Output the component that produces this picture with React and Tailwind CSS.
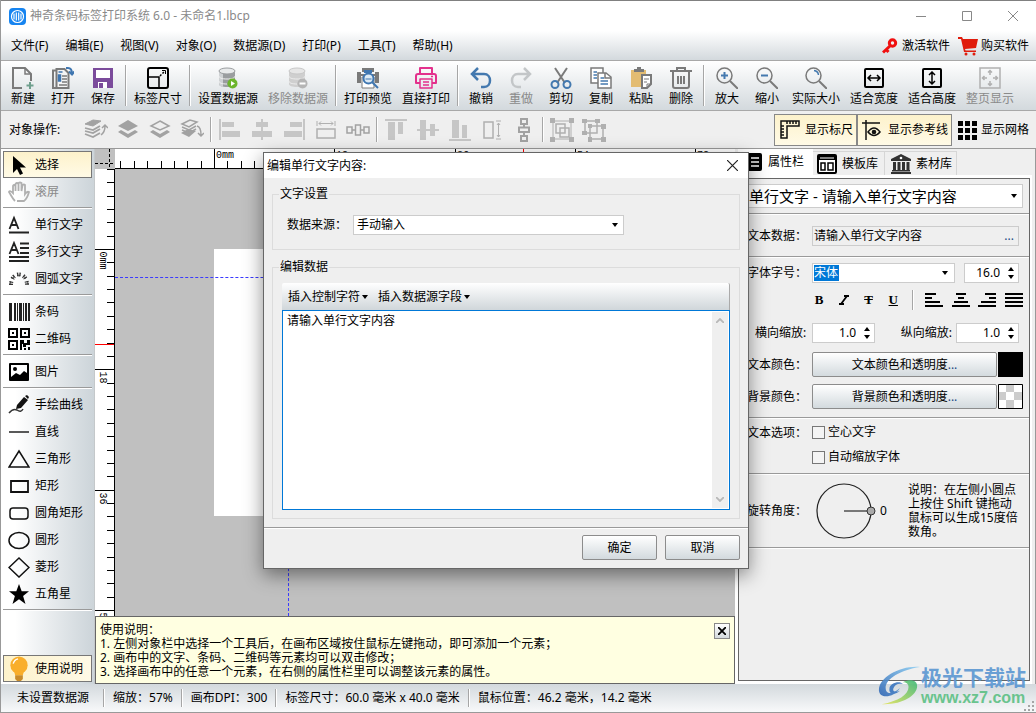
import React, { useState } from 'react';
import clsx from 'clsx';

const G = '#7a7a7a';
const D = '#b0b0b0';

const toolIcons = {
  new: (
    <g fill="none" stroke={G} strokeWidth="2">
      <path d="M10 21H1V1h12l6 6v7" /><path d="M13 1v6h6" strokeWidth="1.5" />
      <path d="M18 15v7M14.500 18.500h7" stroke="#6f9f8d" />
    </g>
  ),
  open: (
    <g fill="none" stroke={G} strokeWidth="1.500">
      <path d="M4 3.500H1V21h3" strokeWidth="2" /><path d="M4.500 2h8l4 4v15h-12z" fill="#f4f4f4" strokeWidth="2" />
      <path d="M10 9h5M10 12h5M10 15h5M7 18h8" /><path d="M6.500 8h2v6h-2zM6.500 5h4" stroke="#3f76b0" fill="#3f76b0" />
      <path d="M14 1h2c3 0 4 2 4 6M17 4.500l3 3 2.500-3" stroke="#3f76b0" strokeWidth="2" />
    </g>
  ),
  save: (
    <g>
      <path d="M1 1h20v20H1z" fill="#7b4b9b" /><path d="M4 3h14v8H4z" fill="#fff" />
      <path d="M6 15h9v6H6z" fill="#fff" /><path d="M7 16h4v5H7z" fill="#7b4b9b" />
    </g>
  ),
  size: (
    <g fill="none" stroke="#000" strokeWidth="2">
      <rect x="1" y="1" width="20" height="20" rx="2" /><path d="M1 10h11v11" strokeWidth="1.500" />
      <path d="M13 9l5-5" strokeDasharray="2 1.500" strokeWidth="1.500" /><path d="M15 3.500h3.500V7" strokeWidth="1" />
    </g>
  ),
  db: (
    <g>
      <path d="M2 4v13c0 2 3 3 8 3s8-1 8-3V4z" fill="#9a9d9f" />
      <path d="M2 4v13c0 2 2 2.500 4 3V5z" fill="#cfd2d4" />
      <ellipse cx="10" cy="4" rx="8" ry="3" fill="#e8eaeb" stroke="#9a9d9f" />
      <path d="M2 9c0 2 3 3 8 3s8-1 8-3M2 14c0 2 3 3 8 3" fill="none" stroke="#f1f1f1" />
      <circle cx="15.500" cy="16.500" r="5" fill="#6cb52d" /><path d="M14 14l4 2.500-4 2.500z" fill="#fff" />
    </g>
  ),
  dbOff: (
    <g>
      <path d="M2 4v13c0 2 3 3 8 3s8-1 8-3V4z" fill="#cfcfcf" />
      <ellipse cx="10" cy="4" rx="8" ry="3" fill="#e6e6e6" stroke="#c8c8c8" />
      <path d="M2 9c0 2 3 3 8 3s8-1 8-3M2 14c0 2 3 3 8 3" fill="none" stroke="#eee" />
      <circle cx="15.500" cy="16.500" r="5" fill="#b5b5b5" /><path d="M12.500 15.500h6v2h-6z" fill="#fff" />
    </g>
  ),
  preview: (
    <g>
      <path d="M0 5h4v2h14V5h4v11h-4V9H4v7H0z" fill={G} />
      <path d="M5 1h12v4H5z" fill={G} /><path d="M7 3h8v3H7z" fill="#3f76b0" />
      <path d="M5 10h12v11H5z" fill="#fff" stroke={G} />
      <circle cx="11.500" cy="11.500" r="5" fill="#dceaf5" stroke="#3f76b0" strokeWidth="2" />
      <path d="M8.500 12h6" stroke="#3f76b0" /><path d="M15 15l6 6" stroke="#3f76b0" strokeWidth="2" />
    </g>
  ),
  print: (
    <g fill="none" stroke="#e3308c" strokeWidth="2" strokeLinejoin="round">
      <path d="M5 7V1h12v6M5 16H1V9q0-2 2-2h16q2 0 2 2v7h-4" /><path d="M5 12h12v9H5zM8 15h6M8 18h6M16 9.500h2" strokeWidth="1.500" />
    </g>
  ),
  undo: <path d="M8 1L2 7l6 6M2 7h12c8 0 8 13 0 13h-3" fill="none" stroke="#4479af" strokeWidth="2.500" />,
  redo: <path d="M14 1l6 6-6 6M20 7H8C0 7 0 20 8 20h3" fill="none" stroke="#c3c6c8" strokeWidth="2.500" />,
  cut: (
    <g fill="none" strokeWidth="2">
      <path d="M5 1l10 15M17 1L7 16" stroke={G} /><circle cx="5" cy="17.500" r="3.500" stroke="#4479af" />
      <circle cx="17" cy="17.500" r="3.500" stroke="#4479af" />
    </g>
  ),
  copy: (
    <g fill="#fff" stroke={G} strokeWidth="1.500">
      <path d="M1 1h12v15H1z" /><path d="M3.500 5H7M3.500 8H7M3.500 11H7" stroke="#4479af" />
      <path d="M8 6h8l5 4v11H8z" /><path d="M15 6v5h6" fill="none" />
      <path d="M10.500 11H14M10.500 14H18M10.500 17H18" stroke="#4479af" />
    </g>
  ),
  paste: (
    <g>
      <path d="M1 3h15v17H1z" fill="#e3bc72" /><path d="M4 5V2h3V0h4v2h3v3z" fill={G} />
      <path d="M12 8h9v9l-4 4h-5z" fill="#fff" stroke={G} strokeWidth="2" /><path d="M14 12h5M14 15h3M17 21v-4h4" stroke={G} fill="none" />
    </g>
  ),
  trash: (
    <g fill="none" stroke={G} strokeWidth="2">
      <path d="M0 4h22M7 4V1h8v3M3 5v14q0 2 2 2h12q2 0 2-2V5" /><path d="M8 9v8M11 9v8M14 9v8" />
    </g>
  ),
  zoomIn: (
    <g fill="none" stroke={G} strokeWidth="1.500">
      <circle cx="8.500" cy="8.500" r="7.500" /><path d="M14 14l8 8" strokeWidth="2" />
      <path d="M8.500 5v7M5 8.500h7" stroke="#4479af" strokeWidth="2" />
    </g>
  ),
  zoomOut: (
    <g fill="none" stroke={G} strokeWidth="1.500">
      <circle cx="8.500" cy="8.500" r="7.500" /><path d="M14 14l8 8" strokeWidth="2" />
      <path d="M5 8.500h7" stroke="#4479af" strokeWidth="2" />
    </g>
  ),
  actual: (
    <g fill="none" stroke={G} strokeWidth="1.500">
      <circle cx="8.500" cy="8.500" r="7.500" /><path d="M14 14l8 8" strokeWidth="2" />
      <path d="M9 3.500q4 .5 4.500 4.500" stroke="#4479af" />
    </g>
  ),
  fitW: (
    <g fill="none" stroke="#000" strokeWidth="1.500">
      <rect x="2" y="2" width="18" height="18" rx="1" strokeWidth="2" /><path d="M4.500 11h13M8 8l-3 3 3 3M14 8l3 3-3 3" />
    </g>
  ),
  fitH: (
    <g fill="none" stroke="#000" strokeWidth="1.500">
      <rect x="2" y="2" width="18" height="18" rx="1" strokeWidth="2" /><path d="M11 4.500v13M8 8l3-3 3 3M8 14l3 3 3-3" />
    </g>
  ),
  fitPage: (
    <g fill="none" stroke={D} strokeWidth="1.500">
      <path d="M1 1h20v20H1z" /><path d="M11 4v4M11 14v4M4 11h4M14 11h4M9 5.500l2-2 2 2M9 16.500l2 2 2-2M5.500 9l-2 2 2 2M16.500 9l2 2-2 2" />
    </g>
  ),
};

const toolGroups = [
  [['新建', 'new'], ['打开', 'open'], ['保存', 'save']],
  [['标签尺寸', 'size']],
  [['设置数据源', 'db'], ['移除数据源', 'dbOff', true]],
  [['打印预览', 'preview'], ['直接打印', 'print']],
  [['撤销', 'undo'], ['重做', 'redo', true], ['剪切', 'cut'], ['复制', 'copy'], ['粘贴', 'paste'], ['删除', 'trash']],
  [['放大', 'zoomIn'], ['缩小', 'zoomOut'], ['实际大小', 'actual'], ['适合宽度', 'fitW'], ['适合高度', 'fitH'], ['整页显示', 'fitPage', true]],
];

const toolWidths = { 2: 'w-10', 4: 'w-[58px]', 5: 'w-[70px]' };

const opGroups = [
  [
    ['置于顶层', <g><path d="M1 6l8-4 8 1-8 5z" fill="#a2a2a2" stroke="#a2a2a2" /><path d="M1 10l8 2 7-4M1 13l8 2 7-4M1 16l8 3 7-4" fill="none" stroke="#a2a2a2" strokeWidth="1.800" /><path d="M17 17q4-3 4-9M18 10l3-3 3 3" fill="none" stroke="#a2a2a2" strokeWidth="1.500" /></g>],
    ['上移一层', <g><path d="M12 2l10 6-10 5L2 8z" fill="#a2a2a2" /><path d="M2 14l3-2 7 4 7-4 3 2-10 6z" fill="#a2a2a2" /></g>],
    ['下移一层', <g><path d="M12 3l9 5-9 4-9-4z" fill="none" stroke="#a2a2a2" strokeWidth="1.500" /><path d="M2 14l3-2 7 4 7-4 3 2-10 6z" fill="#a2a2a2" /></g>],
    ['置于底层', <g><path d="M1 15l7-4 8 2-7 6z" fill="#a2a2a2" /><path d="M2 6l8-4 7 2-8 5zM2 9l7 3 7-4M2 12l7 3 7-4" fill="none" stroke="#a2a2a2" strokeWidth="1.500" /><path d="M17 8q4 1 4 9M18 15l3 3 3-3" fill="none" stroke="#a2a2a2" strokeWidth="1.500" /></g>],
  ],
  [
    ['左对齐', <g fill="#c6c6c6"><path d="M1 1h2v21H1z" /><path d="M4 4h12v5H4z" /><path d="M4 13h18v6H4z" /></g>],
    ['水平居中', <g fill="#c6c6c6"><path d="M11 1h2v21h-2z" /><path d="M6 4h12v5H6z" /><path d="M2 13h20v6H2z" /></g>],
    ['右对齐', <g fill="#c6c6c6"><path d="M21 1h2v21h-2z" /><path d="M8 4h12v5H8z" /><path d="M2 13h18v6H2z" /></g>],
    ['等宽', <g fill="none" stroke={D} strokeWidth="1.500"><path d="M3 3v5M21 3v5M5 5.500h14M7 3.500l-2 2 2 2M17 3.500l2 2-2 2" strokeWidth="1" /><rect x="3" y="11" width="18" height="9" /></g>],
    ['水平等距', <g fill="none" stroke="#a2a2a2" strokeWidth="1.500"><rect x="1" y="9" width="5" height="6" /><rect x="9.500" y="7" width="5" height="10" /><rect x="18" y="9" width="5" height="6" /><path d="M6 12h3M15 12h3" /></g>],
  ],
  [
    ['顶对齐', <g fill="#c6c6c6"><path d="M1 1h22v2H1z" /><path d="M4 4h7v18H4z" /><path d="M14 4h5v12h-5z" /></g>],
    ['垂直居中', <g fill="#c6c6c6"><path d="M1 11h22v2H1z" /><path d="M4 2h6v20H4z" /><path d="M14 6h5v12h-5z" /></g>],
    ['底对齐', <g fill="#c6c6c6"><path d="M1 21h22v2H1z" /><path d="M4 2h7v18H4z" /><path d="M14 7h5v13h-5z" /></g>],
    ['等高', <g fill="none" stroke={D} strokeWidth="1.500"><rect x="4" y="4" width="9" height="16" /><path d="M16 3h5M16 21h5M18.500 5v14M17 7l1.500-2L20 7M17 17l1.500 2 1.500-2" strokeWidth="1" /></g>],
    ['垂直等距', <g fill="none" stroke="#a2a2a2" strokeWidth="2"><rect x="9" y="1" width="6" height="5" /><rect x="7" y="9.500" width="10" height="4.500" /><rect x="9" y="18" width="6" height="5" /><path d="M12 6v3M12 14v4" /></g>],
  ],
  [
    ['组合', <g><path d="M3 3h18v18H3z" fill="none" stroke={D} /><path d="M6 6h9v9H6zM10 10h9v9h-9z" fill="none" stroke={D} strokeWidth="1.500" /><path d="M0 0h5v5H0zM19 0h5v5h-5zM0 19h5v5H0zM19 19h5v5h-5z" fill={D} /></g>],
    ['取消组合', <g><path d="M3 3h12v12H3zM8 8h13v13H8z" fill="none" stroke={D} strokeWidth="1.500" /><path d="M0 1h5v4H0zM13 1h5v4h-5zM0 13h5v4H0zM6 6h4v4H6zM19 6h5v5h-5zM6 19h4v5H6zM19 19h5v5h-5z" fill={D} /></g>],
  ],
];

const star = 'M11 1l2.700 7.300H21l-5.900 4.700L17.500 21 11 16.300 4.500 21l2.400-8L1 8.300h7.300z';

const sideGroups = [
  [
    ['选择', <path d="M5 2v17l4-4 3 6 3-1.500-3-6h6z" fill="#000" />],
    ['滚屏', <path d="M7 20C4 17 3 14 1 11q1-2 4 1V5q1-2 2.500 0v5-7q1.500-2 3 0v7-8q1.500-1 3 0v8l1-6q1.500-1 2.500 0v9q2-3 4-2-2 7-5 9H9" fill="none" stroke={D} strokeWidth="1.800" />],
  ],
  [
    ['单行文字', <g fill="none" stroke="#222" strokeWidth="1.800"><path d="M1.500 15L6 4l4.500 11M3 11h6" /><path d="M1 18.500h20" strokeWidth="2" /></g>],
    ['多行文字', <g fill="none" stroke="#222" strokeWidth="1.800"><path d="M1.500 13L6 2l4.500 11M3 9h6M12 2.500h9M12 7h9M12 12h9M1 16h20M1 20h20" /></g>],
    ['圆弧文字', <g fill="none" stroke="#333"><path d="M3 17C3 3 19 3 19 17" strokeWidth="4" strokeDasharray="1.200 1 1.200 3" /><path d="M2 17C2 4 20 4 20 17" strokeWidth="1" strokeDasharray="3.400 3" /></g>],
  ],
  [
    ['条码', <path d="M1 2h3v18H1zM6 2h2v18H6zM9 2h1v18H9zM11 2h3v18h-3zM15 2h1v18h-1zM17 2h2v18h-2zM20 2h2v18h-2z" fill="#222" />],
    ['二维码', <g><path d="M1 1h8v8H1zM13 1h8v8h-8zM1 13h8v8H1z" fill="none" stroke="#000" strokeWidth="2" /><path d="M4 4h2v2H4zM16 4h2v2h-2zM4 16h2v2H4zM12 12h4v3h3v-3h3v5h-4v2h-3v-3h-1v6h-2zM20 19h2v3h-2zM16 20h2v2h-2z" fill="#000" /></g>],
  ],
  [['图片', <g><rect x="1" y="2" width="20" height="18" rx="1" fill="#000" /><path d="M3 4h16v8l-3-2-4 4-4-2-5 4z" fill="#fff" /><circle cx="7" cy="8" r="2" fill="#000" /></g>]],
  [
    ['手绘曲线', <g><path d="M8 15l1-4 7-8 4 3-7 8zM17 2l2-1 2 2-1 2z" fill="#111" /><path d="M1 19q4-5 8-3 4 3 6-1" fill="none" stroke="#333" strokeWidth="1.500" /></g>],
    ['直线', <path d="M1 11h20" stroke="#222" strokeWidth="1.500" />],
    ['三角形', <path d="M11 3l10 16H1z" fill="none" stroke="#111" strokeWidth="1.500" />],
    ['矩形', <path d="M3 6h17v11H3z" fill="none" stroke="#111" strokeWidth="1.800" />],
    ['圆角矩形', <rect x="2" y="6" width="18" height="11" rx="3" fill="none" stroke="#111" strokeWidth="1.500" />],
    ['圆形', <ellipse cx="11" cy="11.500" rx="10" ry="8" fill="none" stroke="#111" strokeWidth="1.500" />],
    ['菱形', <path d="M11 2l10 9.500L11 21 1 11.500z" fill="none" stroke="#111" strokeWidth="1.500" />],
    ['五角星', <path d={star} fill="#000" />],
  ],
];

// 2mm on the ruler at the current zoom
const PITCH = 13.37;

function VSep({ className }) {
  return (
    <div className={clsx('flex w-1.5 shrink-0 justify-center', className)}>
      <span className="w-px bg-[#a6a6a6]" />
      <span className="w-px bg-white" />
    </div>
  );
}

function HSep() {
  return <div className="h-[2px] shrink-0 border-t border-[#9a9a9a] bg-white" />;
}

function Caret({ className }) {
  return <svg viewBox="0 0 6 4" className={clsx('pointer-events-none h-1 w-1.5', className)}><path d="M0 0h6L3 4z" fill="#000" /></svg>;
}

function Dropdown({ id, label, options, className, wrap }) {
  return (
    <div className={clsx('relative flex', wrap)}>
      <select id={id} aria-label={label} className={clsx('w-full appearance-none border border-[#ccc] bg-white px-[3px] outline-none', className)}>
        {options.map(o => <option key={o}>{o}</option>)}
      </select>
      <Caret className="absolute top-1/2 right-1.5 -mt-[2px]" />
    </div>
  );
}

function Spinner({ id, value, className, label }) {
  return (
    <div className={clsx('flex h-5 items-center border border-[#ccc] bg-white pr-1', className)}>
      <input id={id} aria-label={label} defaultValue={value} className="w-full min-w-0 flex-1 bg-transparent pr-2 text-right outline-none" />
      <svg viewBox="0 0 6 12" className="h-3 w-1.5"><path d="M0 4l3-4 3 4zM0 8l3 4 3-4z" fill="#000" /></svg>
    </div>
  );
}

function TitleBar() {
  return (
    <header className="flex h-[31px] shrink-0 items-center border-t border-[#808080] bg-white pl-2 text-[#8a8a8a]">
      <svg viewBox="0 0 17 17" className="h-[17px] w-[17px]">
        <rect width="17" height="17" rx="4" fill="#1684f0" /><circle cx="8.500" cy="8.500" r="6" fill="none" stroke="#fff" strokeWidth="1.200" />
        <path d="M5 5.500v6M7.300 4.500v8M9.700 4.500v8M12 5.500v6" stroke="#fff" strokeWidth="1.200" />
      </svg>
      <h1 className="ml-1 flex-1">神奇条码标签打印系统 6.0 - 未命名1.lbcp</h1>
      <button aria-label="最小化" className="flex w-[46px] justify-center"><svg viewBox="0 0 10 10" className="h-2.5 w-2.5"><path d="M0 5.500h10" stroke="#888" /></svg></button>
      <button aria-label="最大化" className="flex w-[46px] justify-center"><svg viewBox="0 0 10 10" className="h-2.5 w-2.5"><path d="M.5.5h9v9h-9z" fill="none" stroke="#888" /></svg></button>
      <button aria-label="关闭" className="flex w-[46px] justify-center"><svg viewBox="0 0 10 10" className="h-2.5 w-2.5"><path d="M0 0l10 10M10 0L0 10" stroke="#888" /></svg></button>
    </header>
  );
}

function MenuBar() {
  const menus = ['文件(F)', '编辑(E)', '视图(V)', '对象(O)', '数据源(D)', '打印(P)', '工具(T)', '帮助(H)'];
  return (
    <nav className="flex h-[30px] shrink-0 items-center gap-[17px] border-b border-[#a8a8a8] bg-linear-to-b from-white to-[#d3d9dd] pr-[7px] pl-2.5">
      {menus.map(m => <button key={m}>{m}</button>)}
      <div className="ml-auto flex items-center gap-2">
        <button className="flex items-center gap-1">
          <svg viewBox="0 0 16 16" className="h-4 w-4"><circle cx="10.500" cy="5" r="3.200" fill="none" stroke="#f01010" strokeWidth="3" /><path d="M8.500 7.500L1 14.500M4 11.500l2.500 2.500" stroke="#f01010" strokeWidth="3" /></svg>
          激活软件
        </button>
        <button className="flex items-center gap-[3px]">
          <svg viewBox="0 0 20 20" className="h-5 w-5"><path d="M0 1h4l1 2h15l-2 9-11 1 .5 1.500H18V16H6L3 3H0z" fill="#e01c0c" /><circle cx="8" cy="18" r="1.500" fill="#e01c0c" /><circle cx="16" cy="18" r="1.500" fill="#e01c0c" /></svg>
          购买软件
        </button>
      </div>
    </nav>
  );
}

function Toolbar() {
  return (
    <div className="flex h-[50px] shrink-0 border-b border-[#a8a8a8] bg-linear-to-b from-white to-[#d3d9dd] pl-0.5">
      {toolGroups.map((group, i) => (
        <React.Fragment key={i}>
          {i > 0 && <VSep className="py-1" />}
          {group.map(([label, icon, off]) => (
            <button key={label} disabled={off} className={clsx('flex shrink-0 flex-col items-center pt-1.5', toolWidths[label.length], off && 'text-[#8a8a8a]')}>
              <svg viewBox="0 0 22 22" className="h-[22px] w-[22px]">{toolIcons[icon]}</svg>
              <span className="leading-5">{label}</span>
            </button>
          ))}
        </React.Fragment>
      ))}
    </div>
  );
}

function Toggle({ on, children, onClick }) {
  return (
    <button onClick={onClick} aria-pressed={on} className={clsx('flex h-8 items-center gap-[3px] border px-[3px]', on ? 'border-[#888] bg-linear-to-b from-[#fdf2cb] to-[#fffae6]' : 'border-transparent')}>
      {children}
    </button>
  );
}

function ObjectBar() {
  const [view, setView] = useState({ ruler: true, guides: true, grid: false });
  const flip = k => setView({ ...view, [k]: !view[k] });
  return (
    <div className="flex h-[38px] shrink-0 border-b border-[#999] bg-[#efefef]">
      <span className="flex w-[79px] items-center pl-2">对象操作:</span>
      {opGroups.map((group, i) => (
        <React.Fragment key={i}>
          {i > 0 && <VSep className="py-1.5" />}
          {group.map(([label, icon]) => (
            <button key={label} aria-label={label} disabled className="flex w-8 items-center justify-center">
              <svg viewBox="0 0 24 24" className="h-6 w-6">{icon}</svg>
            </button>
          ))}
        </React.Fragment>
      ))}
      <div className="ml-auto flex items-center pr-[3px]">
        <Toggle on={view.ruler} onClick={() => flip('ruler')}>
          <svg viewBox="0 0 24 24" className="h-6 w-6"><path d="M3 3h18v5H9v12H3zM12 3v3M15 3v3M18 3v3M9 3v3M3 11h3M3 14h3M3 17h3M3 8h3" fill="none" stroke="#111" strokeWidth="1.500" /></svg>
          <span>显示标尺</span>
        </Toggle>
        <Toggle on={view.guides} onClick={() => flip('guides')}>
          <svg viewBox="0 0 24 24" className="h-6 w-6"><path d="M1 5h18M5 2v20" stroke="#111" strokeWidth="1.500" /><path d="M7 14q6-8 12 0-6 7-12 0z" fill="none" stroke="#111" strokeWidth="1.500" /><circle cx="13" cy="14" r="2.300" fill="#111" /></svg>
          <span>显示参考线</span>
        </Toggle>
        <Toggle on={view.grid} onClick={() => flip('grid')}>
          <svg viewBox="0 0 22 22" className="h-[22px] w-[22px]"><path d="M2 2h5v5H2zM9 2h5v5H9zM16 2h5v5h-5zM2 9h5v5H2zM9 9h5v5H9zM16 9h5v5h-5zM2 16h5v5H2zM9 16h5v5H9zM16 16h5v5h-5z" fill="#000" /></svg>
          <span>显示网格</span>
        </Toggle>
      </div>
    </div>
  );
}

function Sidebar({ onHelp }) {
  const [tool, setTool] = useState('选择');
  return (
    <aside className="flex w-[94px] shrink-0 flex-col border-r border-[#c4c8ca] bg-linear-to-r from-white from-15% to-[#ccd4d9] px-0.5 pt-0.5">
      {sideGroups.map((group, i) => (
        <React.Fragment key={i}>
          {group.map(([label, icon]) => (
            <button
              key={label}
              onClick={() => setTool(label)}
              className={clsx('flex h-[27px] shrink-0 items-center gap-[5px] border pl-1 whitespace-nowrap', tool === label ? 'border-[#777] bg-linear-to-b from-[#fdf2cb] to-[#fffae6]' : 'border-transparent', label === '滚屏' && 'text-[#8a8a8a]')}
            >
              <svg viewBox="0 0 22 22" className="h-[22px] w-[22px] shrink-0">{icon}</svg>
              {label}
            </button>
          ))}
          <div className="flex h-1.5 shrink-0 items-center"><div className="w-full"><HSep /></div></div>
        </React.Fragment>
      ))}
      <button onClick={onHelp} className="mt-auto mb-0.5 flex h-[27px] shrink-0 items-center gap-[5px] border border-[#777] bg-linear-to-r from-[#fdf2cb] to-[#fffae6] pl-1">
        <svg viewBox="0 0 22 26" className="h-[25px] w-[22px]"><circle cx="11" cy="9.500" r="9" fill="#f9ae2b" /><path d="M6 16h10l-1 4H7z" fill="#f9ae2b" /><path d="M7 20h8v4l-2 2H9l-2-2z" fill="#c98b2a" /><path d="M5 8q1-4 5-5" fill="none" stroke="#fff" strokeWidth="1.500" /></svg>
        使用说明
      </button>
    </aside>
  );
}

function Ruler({ vertical, zero, marker, to }) {
  const ticks = [];
  for (let i = -7; i <= to; i++) ticks.push(i);
  return (
    <svg className={vertical ? 'h-full w-5 bg-white' : 'h-5 w-full bg-white'} fontFamily="Liberation Mono, monospace" fontSize="10" stroke="none">
      {ticks.map(i => {
        const p = Math.round(zero + i * PITCH) + 0.5;
        const major = i % 9 === 0;
        const a = major ? 0 : 12;
        return (
          <g key={i}>
            {vertical ? <path d={`M${a} ${p}h20`} stroke="#000" /> : <path d={`M${p} ${a}v20`} stroke="#000" />}
            {major && (vertical
              ? <text transform={`translate(5 ${p + 2}) rotate(90)`}>{i === 0 ? '0mm' : i * 2}</text>
              : <text x={p + 1.5} y="9">{i === 0 ? '0mm' : i * 2}</text>)}
          </g>
        );
      })}
      {vertical ? <path d={`M0 ${marker}.5h20`} stroke="#f00" /> : <path d={`M${marker}.5 0v20`} stroke="#f00" />}
      {vertical ? <path d="M19.500 0v2000" stroke="#000" /> : <path d="M0 19.500h2000" stroke="#000" />}
    </svg>
  );
}

function Workspace({ help, onClose }) {
  return (
    <main className="flex min-w-0 flex-1 flex-col">
      <div className="grid min-h-0 flex-1 grid-cols-[20px_1fr] grid-rows-[20px_1fr] overflow-hidden">
        <svg viewBox="0 0 20 20" className="h-5 w-5 bg-[#c0c0c0]"><path d="M14.500 0v20M0 14.500h20" stroke="#000" strokeDasharray="3 2" /></svg>
        <Ruler zero={99} marker={408} to={38} />
        <div className="min-h-0 overflow-hidden"><Ruler vertical zero={80} marker={175} to={30} /></div>
        <div className="relative min-h-0 overflow-hidden bg-[#c0c0c0]">
          <div className="absolute top-20 left-[99px] h-[267px] w-[401px] bg-white" />
          <div className="absolute top-[108px] w-full border-t border-dashed border-[#3a3aff]" />
          <div className="absolute left-[173px] h-full border-l border-dashed border-[#3a3aff]" />
        </div>
      </div>
      {help && (
        <section className="flex h-[68px] shrink-0 items-start justify-between border border-[#666] bg-[#ffffe1] pt-1.5 pr-1 pl-1">
          <div className="leading-[14px]">
            <p>使用说明：</p>
            <p>1. 左侧对象栏中选择一个工具后，在画布区域按住鼠标左键拖动，即可添加一个元素；</p>
            <p>2. 画布中的文字、条码、二维码等元素均可以双击修改；</p>
            <p>3. 选择画布中的任意一个元素，在右侧的属性栏里可以调整该元素的属性。</p>
          </div>
          <button onClick={onClose} aria-label="关闭说明" className="flex h-4 w-4 items-center justify-center border border-[#888] bg-linear-to-b from-white to-[#d3d9dd]">
            <svg viewBox="0 0 8 8" className="h-2 w-2"><path d="M0 0l8 8M8 0L0 8" stroke="#000" strokeWidth="1.800" /></svg>
          </button>
        </section>
      )}
    </main>
  );
}

const alignPaths = [
  ['左对齐文字', 'M0 1h11M0 5h7M0 9h15M0 13h18'],
  ['居中文字', 'M4 1h10M6 5h6M2 9h14M0 13h18'],
  ['右对齐文字', 'M7 1h11M11 5h7M3 9h15M0 13h18'],
  ['两端对齐', 'M0 1h18M0 5h18M0 9h18M0 13h18'],
];

const label = 'w-[65px] shrink-0 whitespace-nowrap';
const silver = 'rounded-xs border border-[#8c8c8c] bg-linear-to-b from-white to-[#d3dade]';

function Properties() {
  return (
    <aside className="flex w-[301px] shrink-0 flex-col border-r border-[#999] bg-[#efefef] pr-[3px]">
      <div role="tablist" className="flex h-[26px] shrink-0 pl-[3px]">
        <button role="tab" aria-selected="true" className="flex w-[75px] items-center gap-1.5 bg-white pl-1.5">
          <svg viewBox="0 0 18 18" className="h-[18px] w-[18px]"><rect width="18" height="18" rx="2" fill="#000" /><path d="M3 5h2M7 5h8M3 9h2M7 9h8M3 13h2M7 13h8" stroke="#fff" strokeWidth="1.500" /></svg>
          属性栏
        </button>
        <button role="tab" aria-selected="false" className="mt-0.5 flex w-[72px] items-center gap-[5px] border-t border-r border-[#d6d6d6] pl-1">
          <svg viewBox="0 0 20 20" className="h-5 w-5"><rect x="1" y="1" width="18" height="18" rx="1" fill="#fff" stroke="#000" strokeWidth="2" /><path d="M1 1h18v5H1z" fill="#000" /><path d="M3 4h14" stroke="#fff" /><path d="M4 9h4v7H4zM11 9h5v7h-5z" fill="none" stroke="#000" strokeWidth="1.500" /></svg>
          模板库
        </button>
        <button role="tab" aria-selected="false" className="mt-0.5 flex w-[72px] items-center gap-[5px] border-t border-r border-[#d6d6d6] pl-1.5">
          <svg viewBox="0 0 20 20" className="h-5 w-5"><path d="M10 0l10 5v2H0V5zM2 8h3v8H2zM6.500 8h3v8h-3zM11 8h3v8h-3zM15.500 8h3v8h-3zM1 16h18v1.500H1zM0 18h20v2H0z" fill="#333" /><circle cx="10" cy="4" r="1.300" fill="#fff" /></svg>
          素材库
        </button>
      </div>
      <div className="flex flex-1 flex-col border-3 border-r-2 border-white">
        <div className="flex flex-1 flex-col border border-[#666] bg-[#efefef]">
          <div className="px-1.5 py-[5px] text-[15px]">
            <Dropdown id="object" label="对象" options={['单行文字 - 请输入单行文字内容']} className="h-6" />
          </div>
          <HSep />
          <div className="flex items-center pt-[11px] pr-2.5 pb-2.5 pl-2">
            <label htmlFor="textData" className={label}>文本数据：</label>
            <div className="flex h-5 flex-1 items-center border border-[#ccc]">
              <input id="textData" defaultValue="请输入单行文字内容" className="w-full min-w-0 flex-1 bg-transparent px-px outline-none" />
              <button aria-label="编辑文本" className="px-1 text-[#1c4a86]">...</button>
            </div>
          </div>
          <HSep />
          <div className="flex flex-col gap-[9px] pt-[5px] pr-2.5 pb-2 pl-2">
            <div className="flex items-center">
              <label htmlFor="font" className={label}>字体字号：</label>
              <div className="relative flex h-5 w-[143px] items-center border border-[#ccc] bg-white px-px">
                <input id="font" defaultValue="宋体" className="w-[25px] bg-[#0078d7] text-white outline-none" />
                <Caret className="absolute right-1.5" />
              </div>
              <Spinner value="16.0" label="字号" className="ml-[9px] flex-1" />
            </div>
            <div className="-mr-1 flex h-4 items-center justify-between pl-16 font-['Liberation_Serif'] text-[13px] leading-4 font-bold">
              <button className="w-4">B</button>
              <button className="flex w-4 justify-center" aria-label="斜体"><svg viewBox="0 0 12 10" className="h-2.5 w-3"><path d="M6 1h5M1 9h5M9 1L3 9" stroke="#000" strokeWidth="1.800" /></svg></button>
              <button className="w-4 line-through">T</button>
              <button className="w-4 underline">U</button>
              <VSep className="h-5" />
              {alignPaths.map(([name, d]) => (
                <button key={name} aria-label={name}><svg viewBox="0 0 18 14" className="h-3.5 w-[18px]"><path d={d} stroke="#000" strokeWidth="2" /></svg></button>
              ))}
            </div>
            <div className="flex items-center pt-1.5">
              <label htmlFor="scaleX" className="w-[65px] pl-2 whitespace-nowrap">横向缩放:</label>
              <Spinner id="scaleX" value="1.0" className="w-[63px]" />
              <label htmlFor="scaleY" className="flex-1 pr-1 text-right">纵向缩放:</label>
              <Spinner id="scaleY" value="1.0" className="w-[63px]" />
            </div>
            <div className="-mr-1 flex items-center">
              <span className={label}>文本颜色：</span>
              <button className={clsx('h-[25px] flex-1', silver)}>文本颜色和透明度<span className="text-[#1c4a86]">...</span></button>
              <span className="ml-px h-[25px] w-[25px] bg-black" />
            </div>
            <div className="-mt-0.5 -mr-1 flex items-center">
              <span className={label}>背景颜色：</span>
              <button className={clsx('h-[25px] flex-1', silver)}>背景颜色和透明度<span className="text-[#1c4a86]">...</span></button>
              <svg viewBox="0 0 25 25" className="ml-px h-[25px] w-[25px]"><path d="M.5.5h24v24H.5z" fill="#fff" stroke="#000" /><path d="M8 1h8v7H8zM1 8h7v8H1zM16 8h8v8h-8zM8 16h8v8H8z" fill="#ccc" /></svg>
            </div>
          </div>
          <HSep />
          <div className="flex pt-[3px] pb-1.5 pl-2">
            <span className={clsx(label, 'pt-[3px]')}>文本选项：</span>
            <div className="flex flex-col gap-[5px]">
              {['空心文字', '自动缩放字体'].map(t => (
                <label key={t} className="flex h-5 items-center gap-[3px]">
                  <input type="checkbox" className="h-[13px] w-[13px] appearance-none border border-[#777] bg-[#f4f4f4]" />{t}
                </label>
              ))}
            </div>
          </div>
          <HSep />
          <div className="flex h-[72px] items-center pl-2">
            <span className={label}>旋转角度：</span>
            <svg viewBox="0 0 64 60" className="ml-1 h-[60px] w-16"><circle cx="28" cy="30" r="27" fill="none" stroke="#222" strokeWidth="1.200" /><path d="M28 30h24" stroke="#000" /><circle cx="55" cy="30" r="4" fill="#aaa" stroke="#333" /></svg>
            <span className="w-7">0</span>
            <p className="flex-1 leading-[14px]">说明：在左侧小圆点<br />上按住 Shift 键拖动<br />鼠标可以生成15度倍<br />数角。</p>
          </div>
          <HSep />
        </div>
      </div>
    </aside>
  );
}

function EditDialog({ onClose }) {
  return (
    <div role="dialog" aria-labelledby="dlgTitle" className="absolute top-[152px] left-[262px] w-[486px] border border-[#666] bg-[#efefef] shadow-[0_6px_18px_rgba(0,0,0,0.45)]">
      <div className="flex h-[25px] items-center justify-between bg-white pr-2.5 pl-[3px]">
        <h2 id="dlgTitle">编辑单行文字内容:</h2>
        <button onClick={onClose} aria-label="关闭"><svg viewBox="0 0 11 11" className="h-[11px] w-[11px]"><path d="M0 0l11 11M11 0L0 11" stroke="#222" strokeWidth="1.200" /></svg></button>
      </div>
      <div className="flex flex-col gap-2 px-2 pt-[7px] pb-2">
        <fieldset className="border border-[#dcdcdc] pb-3.5 pl-3.5">
          <legend className="-ml-2 px-px leading-[18px]">文字设置</legend>
          <div className="flex items-center pt-3">
            <label htmlFor="source" className="w-[66px]">数据来源：</label>
            <Dropdown id="source" options={['手动输入']} wrap="w-[271px]" className="h-5" />
          </div>
        </fieldset>
        <fieldset className="border border-[#dcdcdc] px-[9px] pb-2">
          <legend className="-ml-[3px] px-px leading-[18px]">编辑数据</legend>
          <div className="mt-[7px] flex h-[27px] items-center gap-2.5 rounded-t-xs border-r border-[#aaa] bg-linear-to-b from-white to-[#d0d6da] pl-1.5">
            <button className="flex items-center gap-0.5">插入控制字符<Caret /></button>
            <button className="flex items-center gap-0.5">插入数据源字段<Caret /></button>
          </div>
          <div className="flex h-[200px] border border-[#0078d7] bg-white">
            <textarea aria-label="编辑数据" defaultValue="请输入单行文字内容" className="flex-1 resize-none overflow-hidden px-1 py-0.5 leading-4 outline-none" />
            <div className="m-px flex w-4 flex-col items-center justify-between bg-[#efefef] py-1.5">
              <svg viewBox="0 0 8 5" className="h-[5px] w-2"><path d="M0 5l4-4 4 4" fill="none" stroke="#b8b8b8" strokeWidth="1.800" /></svg>
              <svg viewBox="0 0 8 5" className="h-[5px] w-2"><path d="M0 0l4 4 4-4" fill="none" stroke="#b8b8b8" strokeWidth="1.800" /></svg>
            </div>
          </div>
        </fieldset>
      </div>
      <HSep />
      <div className="flex justify-end gap-2 px-2 pt-1.5 pb-2">
        <button onClick={onClose} className={clsx('h-[25px] w-[75px]', silver)}>确定</button>
        <button onClick={onClose} className={clsx('h-[25px] w-[75px]', silver)}>取消</button>
      </div>
    </div>
  );
}

function StatusBar() {
  const cells = ['缩放：57%', '画布DPI：300', '标签尺寸：60.0 毫米 x 40.0 毫米', '鼠标位置：46.2 毫米，14.2 毫米'];
  return (
    <footer className="flex h-[29px] shrink-0 items-center gap-1 border-b border-[#999] bg-linear-to-b from-[#d3d9dd] to-[#f8f9fa] pl-4">
      <span className="pr-2">未设置数据源</span>
      {cells.map(c => (
        <React.Fragment key={c}>
          <VSep className="h-[18px]" />
          <span className="px-0.5">{c}</span>
        </React.Fragment>
      ))}
    </footer>
  );
}

function SiteMark() {
  return (
    <div className="pointer-events-none absolute right-2.5 bottom-1.5 flex items-center gap-px opacity-90">
      <svg viewBox="0 0 44 42" className="h-[42px] w-[42px]">
        <defs>
          <linearGradient id="blue" x1="1" y1="0" x2="0" y2="1"><stop offset="0" stopColor="#8fd0f4" /><stop offset="1" stopColor="#2f66b4" /></linearGradient>
          <linearGradient id="green" x1="1" y1="0" x2="0" y2="1"><stop offset="0" stopColor="#3cb878" /><stop offset="1" stopColor="#e6e45a" /></linearGradient>
        </defs>
        <path d="M44 1C24-1 0 12 1 26c1 9 16 7 22-3-8 7-15 7-15 0C8 13 24 4 44 1z" fill="url(#blue)" />
        <path d="M12 24c0-6 11-9 14-5-5-1-9 1-10 5-1 3 3 4 7 2-5 5-12 4-11-2z" fill="#3a76c0" />
        <path d="M26 17c8-4 15-2 15 4 0 10-16 20-37 19 17-3 28-10 28-18 0-3-2-5-6-5z" fill="url(#green)" />
      </svg>
      <div>
        <div className="text-[21px] leading-6 font-bold text-[#5b97d2]">极光下载站</div>
        <div className="font-['Liberation_Sans'] text-base leading-[18px] font-bold text-[#5cc084]">www.xz7.com</div>
      </div>
    </div>
  );
}

export default function App() {
  const [dialog, setDialog] = useState(true);
  const [help, setHelp] = useState(true);

  return (
    <div lang="zh-CN" className="relative flex h-screen flex-col overflow-hidden border-l border-[#999] bg-[#efefef] font-['Noto_Sans','Noto_Sans_CJK_SC',sans-serif] text-xs text-black">
      <TitleBar />
      <MenuBar />
      <Toolbar />
      <ObjectBar />
      <div className="flex min-h-0 flex-1">
        <Sidebar onHelp={() => setHelp(true)} />
        <Workspace help={help} onClose={() => setHelp(false)} />
        <Properties />
      </div>
      <StatusBar />
      {dialog && <EditDialog onClose={() => setDialog(false)} />}
      <SiteMark />
      <svg viewBox="0 0 10 10" className="absolute right-0.5 bottom-0.5 h-2.5 w-2.5"><path d="M8 0h2v2H8zM4 4h2v2H4zM8 4h2v2H8zM0 8h2v2H0zM4 8h2v2H4zM8 8h2v2H8z" fill="#a5a5a5" /></svg>
    </div>
  );
}
